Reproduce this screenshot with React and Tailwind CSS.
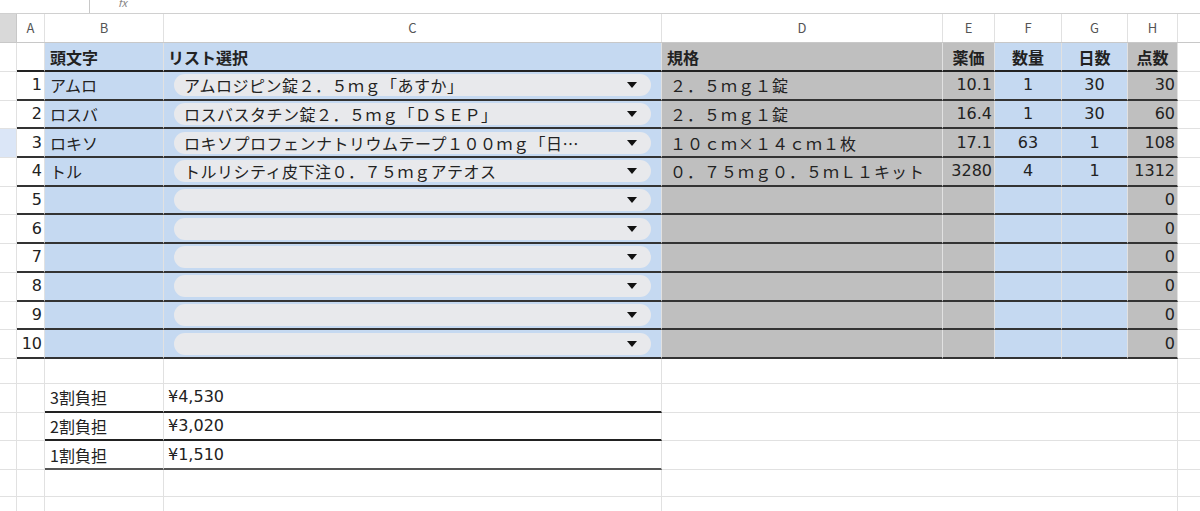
const cols = "grid grid-cols-[17px_28px_119px_498px_281px_52px_67px_66px_50px_1fr]";
const F = { fontFamily: '"Noto Sans CJK JP", "Noto Sans", sans-serif' };
const N = { fontFamily: '"DejaVu Sans", "Noto Sans CJK JP", sans-serif' };
const blue = "bg-[#c5d9f1]";
const gray = "bg-[#bfbfbf]";
const data = [
  ["アムロ", "アムロジピン錠２．５ｍｇ「あすか」", "２．５ｍｇ１錠", "10.1", "1", "30", "30"],
  ["ロスバ", "ロスバスタチン錠２．５ｍｇ「ＤＳＥＰ」", "２．５ｍｇ１錠", "16.4", "1", "30", "60"],
  ["ロキソ", "ロキソプロフェンナトリウムテープ１００ｍｇ「日…", "１０ｃｍ×１４ｃｍ１枚", "17.1", "63", "1", "108"],
  ["トル", "トルリシティ皮下注０．７５ｍｇアテオス", "０．７５ｍｇ０．５ｍＬ１キット", "3280", "4", "1", "1312"],
];
for (let i = 0; i < 6; i++) data.push(["", "", "", "", "", "", "0"]);

function Caret() {
  return <svg width="10" height="6" viewBox="0 0 10 6"><path d="M0 0H10L5 6Z" fill="#111" /></svg>;
}

export default function App() {
  const c = "border-r border-[#e1e1e1] flex items-center overflow-hidden whitespace-nowrap";
  return (
    <div className="w-[1200px] h-[511px] bg-white overflow-hidden text-[16px] text-[#222]" style={F}>
      <div className="h-[14px] flex border-b border-[#d0d0d0] overflow-hidden">
        <div className="w-[90px] border-r border-[#c8c8c8]" />
        <div className="pl-[28px] text-[11px] italic text-[#888] leading-[10px] -mt-[3px]">fx</div>
      </div>
      <div className={`${cols} h-[29px] text-[13px] text-[#555] border-b border-[#c8c8c8]`}>
        <div className="bg-[#d9d9d9] border-r border-[#c8c8c8]" />
        {["A", "B", "C", "D", "E", "F", "G", "H"].map((l) => (
          <div key={l} className={`${c} justify-center`}>{l}</div>
        ))}
        <div />
      </div>
      <div className={`${cols} h-[29px] font-bold`}>
        <div className="border-r border-b border-[#e1e1e1]" />
        <div className={`${c} border-b-2 border-b-[#222]`} />
        <div className={`${c} ${blue} px-[5px] border-b-2 border-b-[#222]`}>頭文字</div>
        <div className={`${c} ${blue} px-[4px] border-b-2 border-b-[#222]`}>リスト選択</div>
        <div className={`${c} ${gray} px-[5px] border-b-2 border-b-[#222]`}>規格</div>
        <div className={`${c} ${gray} justify-center border-b-2 border-b-[#222]`}>薬価</div>
        <div className={`${c} ${blue} justify-center border-b-2 border-b-[#222]`}>数量</div>
        <div className={`${c} ${blue} justify-center border-b-2 border-b-[#222]`}>日数</div>
        <div className={`${c} ${gray} justify-center border-b-2 border-b-[#222]`}>点数</div>
        <div className="border-b border-[#e1e1e1]" />
      </div>
      {data.map((r, i) => (
        <div key={i} className={`${cols} h-[28.7px]`}>
          <div className={`border-r border-b border-[#e1e1e1] ${i === 2 ? "bg-[#dbe6f7]" : ""}`} />
          <div className={`${c} justify-end pr-[2px] border-b-2 border-b-[#333] text-[16px]`} style={N}>{i + 1}</div>
          <div className={`${c} ${blue} px-[5px] border-b-2 border-b-[#333]`}>{r[0]}</div>
          <div className={`${c} ${blue} px-[10px] border-b-2 border-b-[#333]`}>
            <div className="w-full h-[22px] rounded-full bg-[#e8e9ec] flex items-center justify-between pl-[10px] pr-[14px]">
              <span className="tracking-[0.5px]">{r[1]}</span>
              <Caret />
            </div>
          </div>
          <div className={`${c} ${gray} px-[8px] border-b-2 border-b-[#333] tracking-[1px]`}>{r[2]}</div>
          <div className={`${c} ${gray} justify-end pr-[2px] border-b-2 border-b-[#333] text-[16px]`} style={N}>{r[3]}</div>
          <div className={`${c} ${blue} justify-center border-b-2 border-b-[#333] text-[16px]`} style={N}>{r[4]}</div>
          <div className={`${c} ${blue} justify-center border-b-2 border-b-[#333] text-[16px]`} style={N}>{r[5]}</div>
          <div className={`${c} ${gray} justify-end pr-[2px] border-b-2 border-b-[#333] text-[16px]`} style={N}>{r[6]}</div>
          <div className="border-b border-[#e1e1e1]" />
        </div>
      ))}
      <div className={`${cols} h-[25px]`}>
        <div className="border-r border-b border-[#e1e1e1]" />
        <div className="border-r border-b border-[#e1e1e1]" />
        <div className="border-r border-b border-[#e1e1e1]" />
        <div className="border-r border-b border-[#e1e1e1]" />
        <div className="col-span-5 border-r border-b border-[#e1e1e1]" />
        <div className="border-b border-[#e1e1e1]" />
      </div>
      {[["3割負担", "¥4,530"], ["2割負担", "¥3,020"], ["1割負担", "¥1,510"]].map((r, i) => (
        <div key={i} className={`${cols} h-[28.7px]`}>
          <div className="border-r border-b border-[#e1e1e1]" />
          <div className="border-r border-b border-[#e1e1e1]" />
          <div className={`${c} px-[5px] border-b-2 ${i === 2 ? "border-b-[#555]" : "border-b-[#222]"}`}>{r[0]}</div>
          <div className={`${c} px-[4px] border-b-2 ${i === 2 ? "border-b-[#555]" : "border-b-[#222]"}`} style={N}>{r[1]}</div>
          <div className="col-span-5 border-r border-b border-[#e1e1e1]" />
          <div className="border-b border-[#e1e1e1]" />
        </div>
      ))}
      {[0, 1].map((i) => (
        <div key={i} className={`${cols} h-[27px]`}>
          <div className="border-r border-b border-[#e1e1e1]" />
          <div className="border-r border-b border-[#e1e1e1]" />
          <div className="border-r border-b border-[#e1e1e1]" />
          <div className="border-r border-b border-[#e1e1e1]" />
          <div className="col-span-5 border-r border-b border-[#e1e1e1]" />
          <div className="border-b border-[#e1e1e1]" />
        </div>
      ))}
    </div>
  );
}
